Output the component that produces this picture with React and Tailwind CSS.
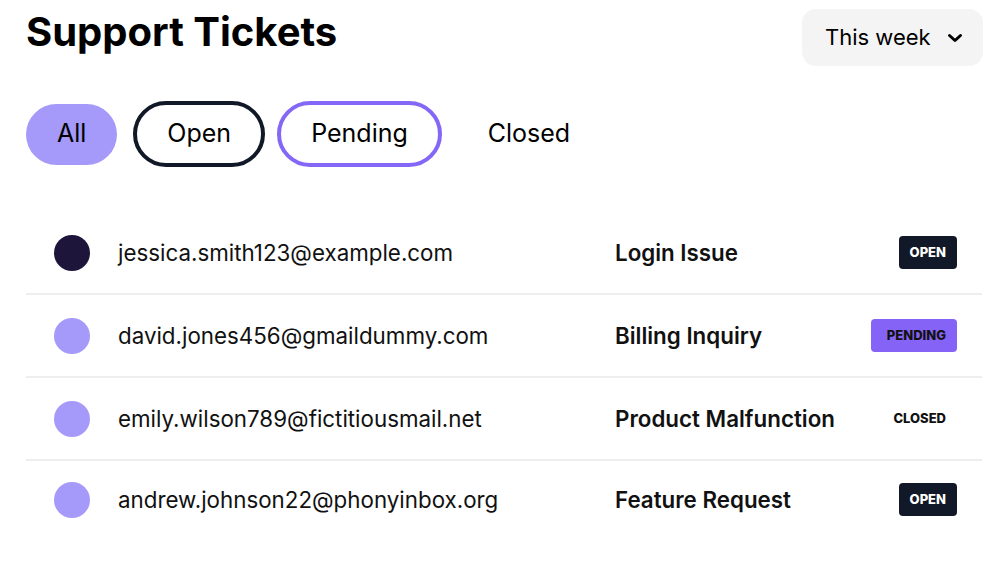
import React from "react";

const rows = [
  { email: "jessica.smith123@example.com", subject: "Login Issue", status: "OPEN", dark: true },
  { email: "david.jones456@gmaildummy.com", subject: "Billing Inquiry", status: "PENDING" },
  { email: "emily.wilson789@fictitiousmail.net", subject: "Product Malfunction", status: "CLOSED" },
  { email: "andrew.johnson22@phonyinbox.org", subject: "Feature Request", status: "OPEN" },
];

function Badge({ status }) {
  if (status === "OPEN")
    return (
      <span className="rounded-[4px] bg-[#111827] px-[11px] py-[8px] text-[13px] leading-[17px] font-extrabold text-white">
        OPEN
      </span>
    );
  if (status === "PENDING")
    return (
      <span className="rounded-[4px] bg-[#8463f6] pl-[16px] pr-[11px] py-[8px] text-[13px] leading-[17px] font-extrabold text-[#111]">
        PENDING
      </span>
    );
  return (
    <span className="px-[11px] py-[8px] text-[13px] leading-[17px] font-extrabold text-[#111]">
      CLOSED
    </span>
  );
}

export default function App() {
  return (
    <div className="min-h-[561px] w-[1002px] bg-white text-[#111] font-['Inter',sans-serif]">
      <div className="flex items-start justify-between pl-[26px] pr-[19px] pt-[9px]">
        <h1 className="mt-[1px] text-[40px] leading-[44px] font-bold text-black">Support Tickets</h1>
        <button className="flex h-[57px] w-[181px] items-center justify-between rounded-[14px] bg-[#f4f4f4] pl-[23px] pr-[20px] text-[22px] text-black">
          <span>This week</span>
          <svg width="16" height="10" viewBox="0 0 16 10" fill="none" stroke="currentColor" strokeWidth="3" strokeLinecap="round" strokeLinejoin="round">
            <path d="M2.5 2.5L8 7.5L13.5 2.5" />
          </svg>
        </button>
      </div>

      <div className="mt-[35px] flex items-center gap-[12px] pl-[26px] text-[25px]">
        <button className="mr-[4px] h-[61px] rounded-full bg-[#a599f9] px-[31px] text-black">All</button>
        <button className="h-[66px] rounded-full border-[4px] border-[#111827] px-[30px] text-black">Open</button>
        <button className="h-[66px] rounded-full border-[4px] border-[#8567f7] px-[30px] text-black">Pending</button>
        <button className="h-[66px] rounded-full border-[4px] border-transparent px-[30px] text-black">Closed</button>
      </div>

      <div className="mt-[45px] ml-[26px] mr-[20px]">
        {rows.map((r, i) => (
          <div
            key={r.email}
            className={`flex items-center pl-[28px] pr-[25px] ${i < rows.length - 1 ? "h-[83px] border-b-2 border-[#eeeeee]" : "h-[77px]"}`}
          >
            <span className={`h-[36px] w-[36px] shrink-0 rounded-full ${r.dark ? "bg-[#1e153a]" : "bg-[#a599f9]"}`} />
            <span className="ml-[28px] w-[497px] text-[22.35px] text-[#111]">{r.email}</span>
            <span className="flex-1 text-[22.35px] font-semibold text-[#111]">{r.subject}</span>
            <Badge status={r.status} />
          </div>
        ))}
      </div>
    </div>
  );
}
